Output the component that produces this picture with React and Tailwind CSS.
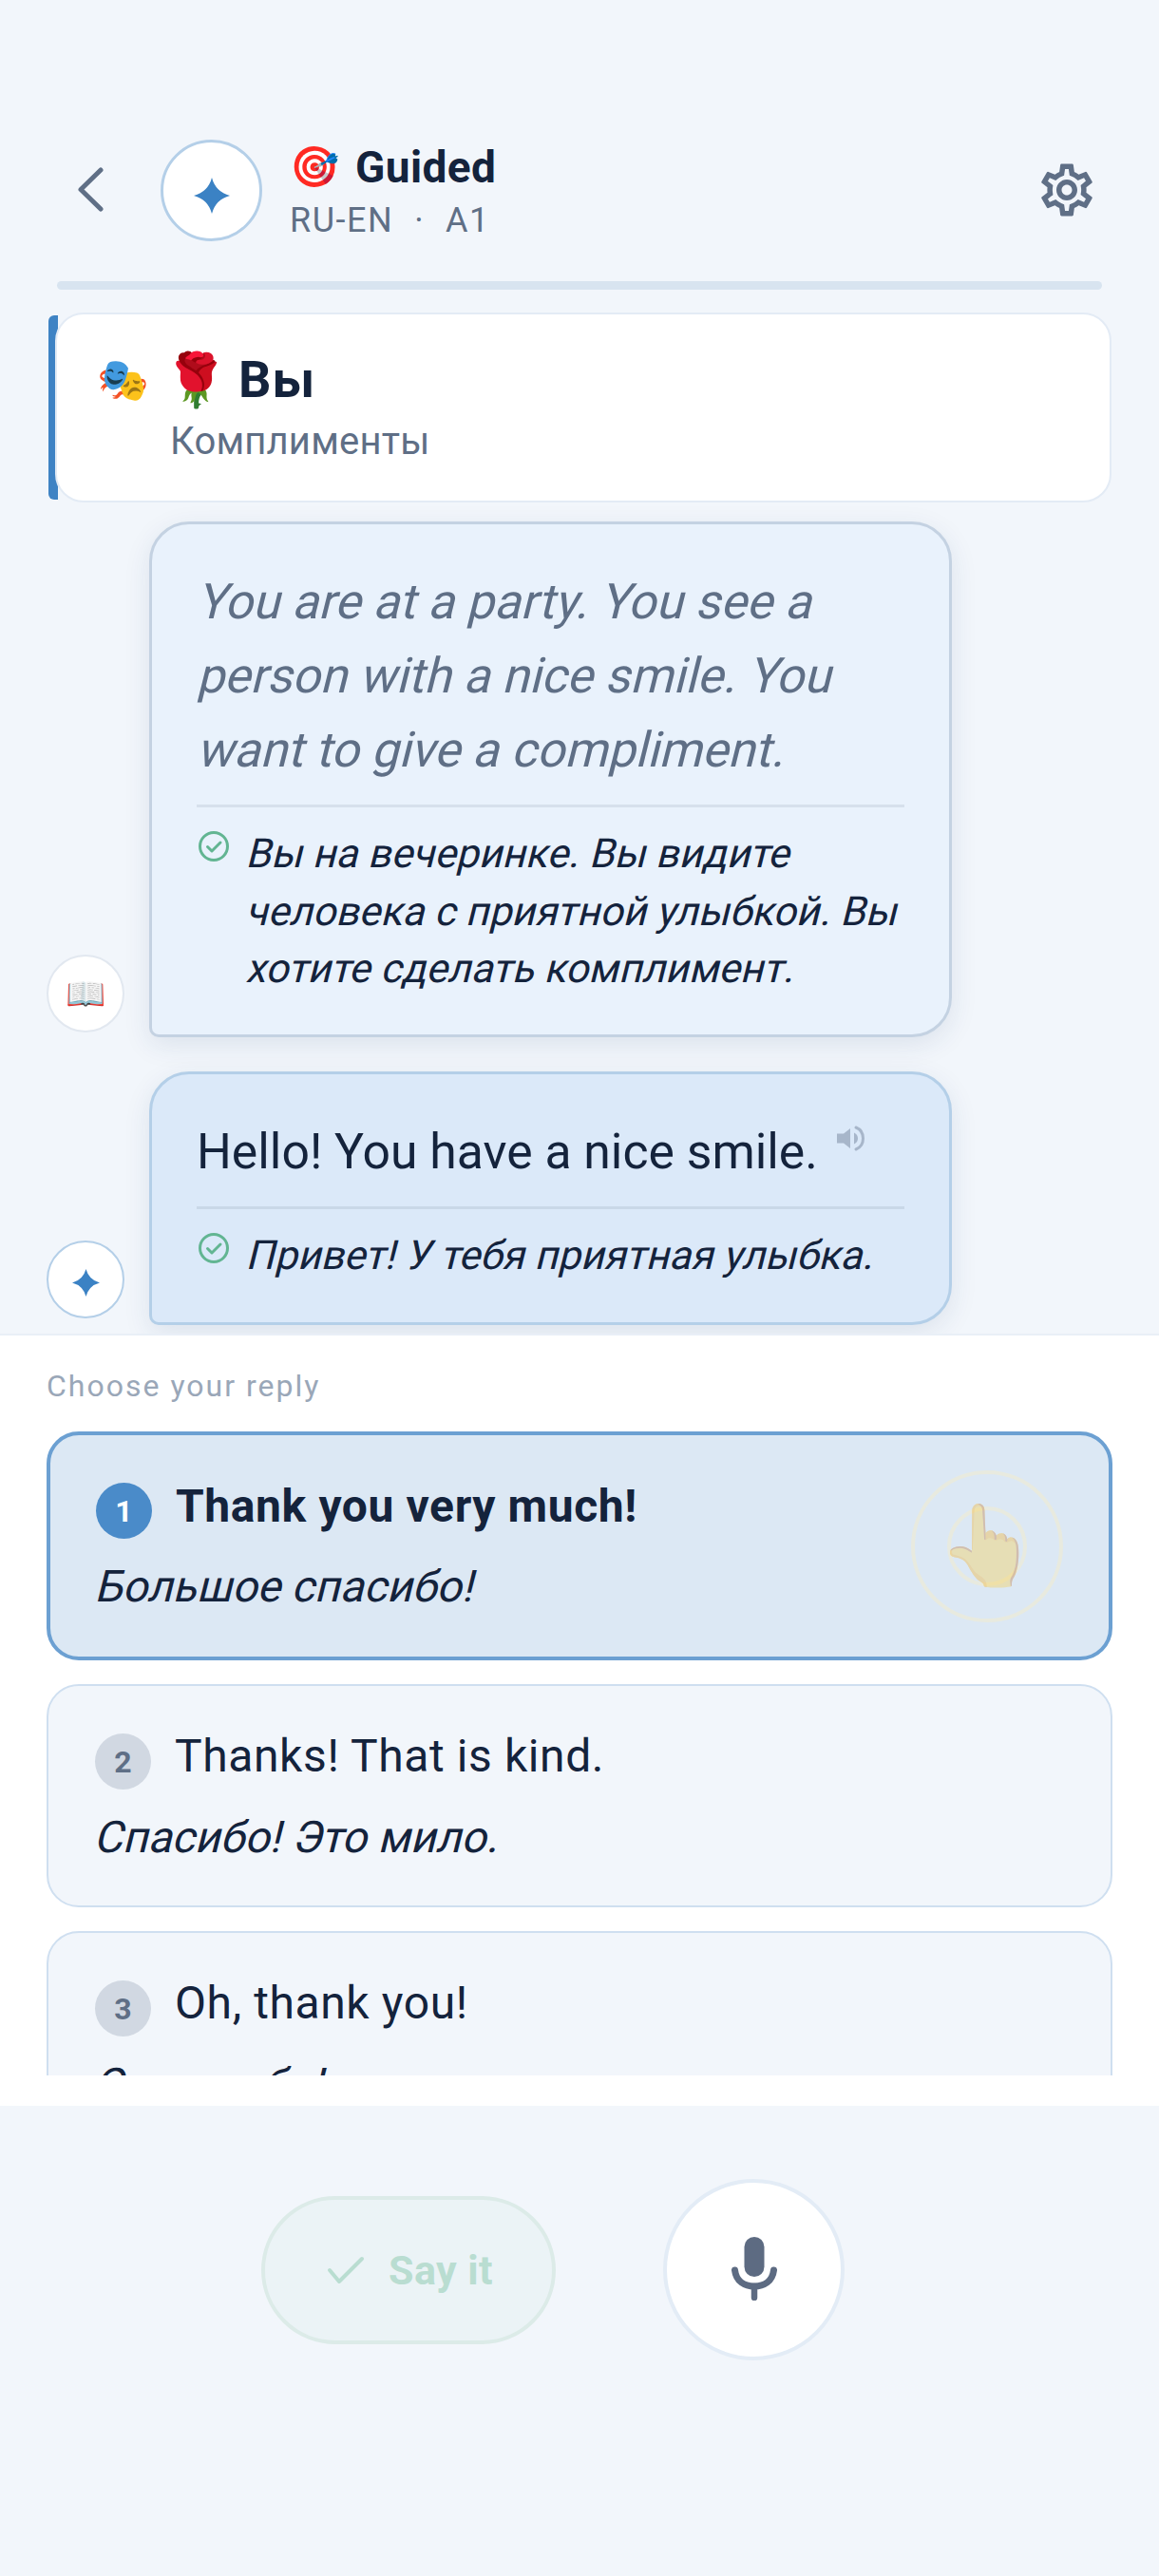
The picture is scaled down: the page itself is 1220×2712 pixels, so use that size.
import React from "react";
import { MdOutlineSettings } from "react-icons/md";

const Star = ({ s = 40 }) => (
  <svg width={s} height={s} viewBox="0 0 24 24" className="block">
    <path d="M12 0Q14.5 9.5 24 12Q14.5 14.5 12 24Q9.5 14.5 0 12Q9.5 9.5 12 0Z" fill="#3b82c4" />
  </svg>
);

const Tick = () => (
  <svg width="36" height="36" viewBox="0 0 36 36" fill="none" className="mt-[5px] shrink-0">
    <circle cx="18" cy="18" r="14.5" stroke="#62b592" strokeWidth="3" />
    <path d="M11.5 18.5l4.5 4.5 9-9" stroke="#62b592" strokeWidth="3" strokeLinecap="round" strokeLinejoin="round" />
  </svg>
);

const Speaker = () => (
  <svg width="29" height="27" viewBox="0 0 29 27" className="ml-[20px] mt-[11px] shrink-0">
    <path d="M0 8.5h7L14 3v21l-7-5.5H0z" fill="#a7b6ca" />
    <path d="M18 7.5c2.8 1.4 4 3.5 4 6s-1.2 4.6-4 6z" fill="#a7b6ca" />
    <path d="M20 2c5 2 7.5 6.5 7.5 11.5S25 23 20 25" fill="none" stroke="#a7b6ca" strokeWidth="3" strokeLinecap="round" />
  </svg>
);

const Slant = ({ lines, className }) => (
  <div className={className}>
    {lines.map((l) => (
      <span key={l} className="block w-max origin-[0_70%] skew-x-[-14deg] whitespace-nowrap">{l}</span>
    ))}
  </div>
);

const Option = ({ n, en, ru, active }) => (
  <div className={`relative shrink-0 rounded-[34px] pr-[40px] ${active ? "border-[4px] border-[#6ca0d2] bg-[#dce8f4] pb-[41px] pl-[48px] pt-[39px]" : "border-2 border-[#cfdff0] bg-[#f2f6fb] pb-[39px] pl-[49px] pt-[38px]"}`}>
    <div className="flex items-start gap-[25px]">
      <div className={`flex h-[59px] w-[59px] shrink-0 items-center justify-center rounded-full text-[32px] font-bold ${active ? "mt-[11px] bg-[#4a8bc9] text-white" : "mt-[12px] bg-[#d1d8e2] text-[#5f6f86]"}`}>{n}</div>
      <div className={`text-[48px] leading-[72px] tracking-[0.6px] text-[#14233c] ${active ? "font-bold" : ""}`}>{en}</div>
    </div>
    <Slant lines={[ru]} className={`-ml-[1px] text-[46.3px] leading-[66px] text-[#14233c] ${active ? "mt-[15px]" : "mt-[16px]"}`} />
    {active && (
      <div className="absolute right-[48px] top-[37px] flex h-[160px] w-[160px] items-center justify-center rounded-full border-[4px] border-[#e8eadf]">
        <div className="absolute h-[84px] w-[84px] rounded-full border-[4px] border-[#e8eadf]" />
        <span className="relative text-[84px] leading-none opacity-30">👆</span>
      </div>
    )}
  </div>
);

const Bubble = ({ avatar, mb, bg, children, mt, pb }) => (
  <div className={`ml-[49px] flex items-end gap-[26px] ${mt}`}>
    <div className={`flex h-[82px] w-[82px] shrink-0 items-center justify-center rounded-full border-2 bg-white ${mb}`}>{avatar}</div>
    <div className={`w-[845px] rounded-[42px] rounded-bl-[10px] border-[3px] px-[47px] pt-[43px] shadow-[0_8px_28px_rgba(30,60,110,0.1)] ${pb} ${bg}`}>{children}</div>
  </div>
);

export default function App() {
  return (
    <div className="flex h-[2712px] w-[1220px] flex-col overflow-hidden bg-[#f2f6fb]" style={{ fontFamily: "Roboto, sans-serif" }}>
      <header className="mt-[147px] flex h-[108px] shrink-0 items-start">
        <svg width="27" height="47" viewBox="0 0 27 47" fill="none" className="ml-[82px] mt-[29px] shrink-0">
          <path d="M24 3 3 23.5 24 44" stroke="#5f6f86" strokeWidth="5" strokeLinecap="round" strokeLinejoin="round" />
        </svg>
        <div className="ml-[60px] flex h-[107px] w-[107px] shrink-0 items-center justify-center rounded-full border-[3px] border-[#b4cfe8] bg-white">
          <div className="mt-[10px]"><Star s={38} /></div>
        </div>
        <div className="ml-[29px] mt-[3px]">
          <div className="flex h-[52px] items-center gap-[17px] text-[#14233c]">
            <span className="text-[42px] leading-none">🎯</span>
            <span className="text-[46px] font-bold leading-[52px] tracking-[0.4px]">Guided</span>
          </div>
          <div className="mt-[8px] flex gap-[22px] text-[36px] leading-[44px] tracking-[1.5px] text-[#5f6f86]">
            <span>RU-EN</span><span>·</span><span>A1</span>
          </div>
        </div>
        <div className="flex-1" />
        <MdOutlineSettings size={66} className="mr-[64px] mt-[20px] text-[#5f6f86]" />
      </header>

      <div className="mx-[60px] mt-[41px] h-[9px] shrink-0 rounded-full bg-[#d8e4f0]" />

      <div className="relative ml-[51px] mr-[50px] mt-[24px] h-[200px] shrink-0">
        <div className="absolute bottom-[3px] left-0 top-[3px] w-[10px] rounded-l-[6px] bg-[#3f83c4]" />
        <div className="relative ml-[7px] h-full rounded-[30px] border-2 border-[#e3ebf5] bg-white pl-[42px] pt-[39px]">
          <div className="flex h-[60px] items-center">
            <span className="w-[52px] text-[44px] leading-none">🎭</span>
            <span className="ml-[18px] w-[64px] text-[55px] leading-none">🌹</span>
            <span className="ml-[15px] text-[54px] font-bold leading-[60px] tracking-[1px] text-[#14233c]">Вы</span>
          </div>
          <div className="ml-[77px] mt-[11px] text-[40px] leading-[48px] tracking-[0.2px] text-[#5f6f86]">Комплименты</div>
        </div>
      </div>

      <div className="min-h-0 flex-1">
        <Bubble mt="mt-[20px]" pb="pb-[39px]" mb="mb-[5px] border-[#e2e8f0]" bg="border-[#c4d2e2] bg-[#e9f2fc]" avatar={<span className="text-[34px] leading-none">📖</span>}>
          <Slant lines={["You are at a party. You see a", "person with a nice smile. You", "want to give a compliment."]} className="text-[51.6px] leading-[78px] text-[#5f6f86]" />
          <div className="mb-[18px] mt-[18px] h-[3px] bg-[#d6e0ec]" />
          <div className="flex gap-[16px]">
            <Tick />
            <Slant lines={["Вы на вечеринке. Вы видите", "человека с приятной улыбкой. Вы", "хотите сделать комплимент."]} className="text-[42.6px] leading-[60.5px] text-[#14233c]" />
          </div>
        </Bubble>
        <Bubble mt="mt-[36px]" pb="pb-[41px]" mb="mb-[7px] border-[#b4cfe8]" bg="border-[#b4cfe8] bg-[#dbe9f9]" avatar={<div className="mt-[6px]"><Star s={29} /></div>}>
          <div className="flex items-start"><p className="whitespace-nowrap text-[51.7px] leading-[78px] text-[#14233c]">Hello! You have a nice smile.</p><Speaker /></div>
          <div className="mb-[18px] mt-[18px] h-[3px] bg-[#c9d8e8]" />
          <div className="flex gap-[16px]">
            <Tick />
            <Slant lines={["Привет! У тебя приятная улыбка."]} className="text-[42.6px] leading-[60.5px] text-[#14233c]" />
          </div>
        </Bubble>
      </div>

      <div className="flex h-[813px] shrink-0 flex-col border-t-2 border-[#e9eff7] bg-white px-[49px] pb-[32px] pt-[31px]">
        <div className="text-[32px] leading-[44px] tracking-[2px] text-[#9aa7b8]">Choose your reply</div>
        <div className="mt-[26px] flex min-h-0 flex-1 flex-col gap-[25px] overflow-hidden">
          <Option n="1" en="Thank you very much!" ru="Большое спасибо!" active />
          <Option n="2" en="Thanks! That is kind." ru="Спасибо! Это мило." />
          <Option n="3" en="Oh, thank you!" ru="О, спасибо!" />
        </div>
      </div>

      <div className="flex h-[495px] shrink-0 items-start pt-[77px]">
        <div className="ml-[275px] mt-[18px] flex h-[156px] w-[310px] items-center justify-center gap-[25px] rounded-full border-[4px] border-[#dcebe8] bg-[#ebf3f6] pl-[3px] text-[43px] font-bold tracking-[0.4px] text-[#b9ddd1]">
          <svg width="40" height="30" viewBox="0 0 40 30" fill="none">
            <path d="M3 15l10 12L37 3" stroke="#b9ddd1" strokeWidth="4" strokeLinecap="round" strokeLinejoin="round" />
          </svg>
          Say it
        </div>
        <div className="ml-[113px] flex h-[191px] w-[191px] items-center justify-center rounded-full border-[4px] border-[#e3ecf6] bg-white">
          <svg width="48" height="67" viewBox="0 0 48 67" fill="none" className="mt-[-2px]">
            <rect x="13.5" y="0" width="21" height="42" rx="10.5" fill="#5d6b82" />
            <path d="M3.5 35C5 47 14 52 24 52S43 47 44.5 35" stroke="#5d6b82" strokeWidth="7" strokeLinecap="round" />
            <path d="M24 52V64" stroke="#5d6b82" strokeWidth="6.5" strokeLinecap="round" />
          </svg>
        </div>
      </div>
    </div>
  );
}
